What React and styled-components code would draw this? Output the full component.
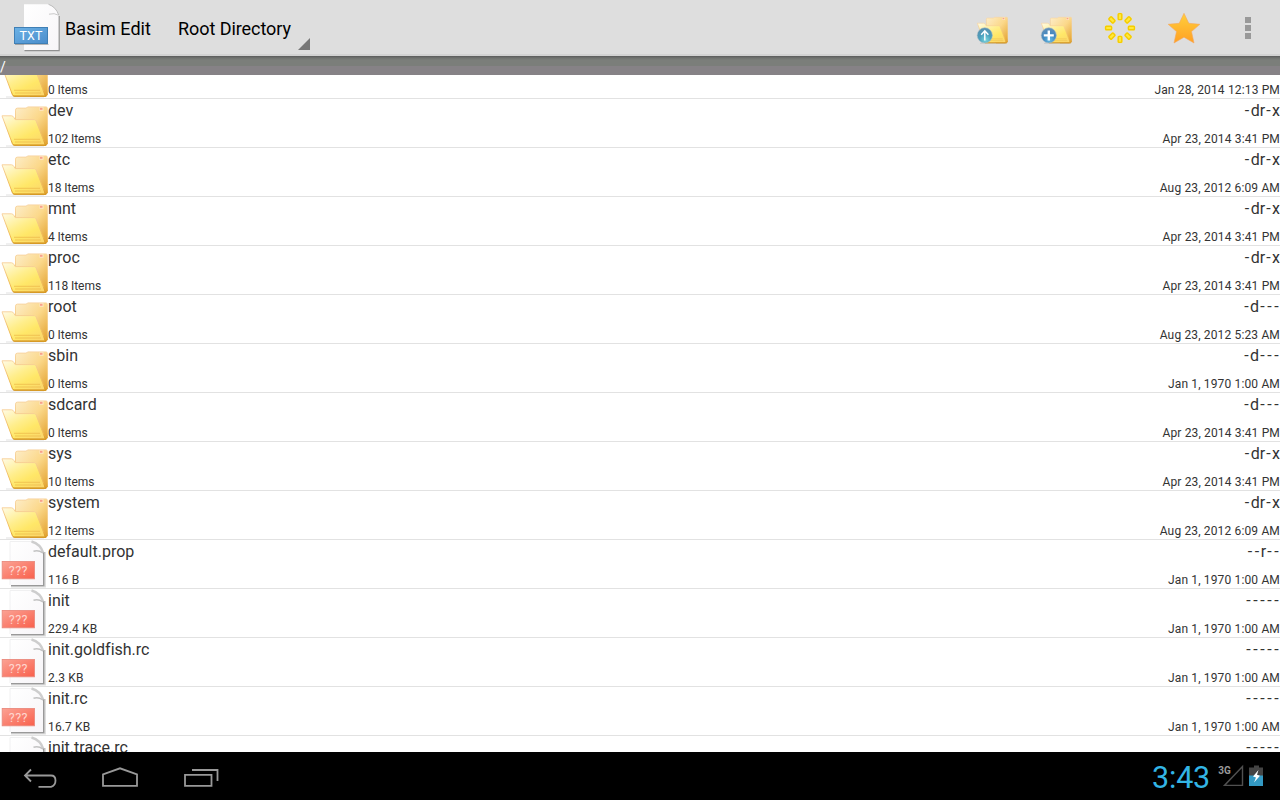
import React from 'react';
import styled, { createGlobalStyle } from 'styled-components';

const GlobalStyle = createGlobalStyle`
  * {
    box-sizing: border-box;
  }

  body {
    margin: 0;
    overflow: hidden;
    font-family: Roboto, sans-serif;
    font-variant-ligatures: none;
  }

  svg {
    display: block;
    flex: none;
  }
`;

const Screen = styled.div`
  display: flex;
  flex-direction: column;
  width: 1280px;
  height: 800px;
  overflow: hidden;
  background: #fff;
`;

const ActionBar = styled.header`
  display: flex;
  height: 56px;
  flex: none;
  background: #dedede;
  border-bottom: 2px solid #d2d2d2;
  color: #000;
`;

const AppIcon = styled.div`
  padding: 3px 0 0 13px;
`;

const Title = styled.div`
  width: 113px;
  padding-left: 4px;
  font-size: 18px;
  line-height: 58px;
  letter-spacing: ${p => p.$spacing || '0'};
  white-space: nowrap;
`;

const Spinner = styled.div`
  display: flex;
  width: 136px;
  justify-content: space-between;
`;

const SpinnerArrow = styled.div`
  padding-top: 38px;
`;

const Actions = styled.div`
  display: flex;
  margin-left: auto;
`;

const Action = styled.div`
  display: flex;
  justify-content: center;
  width: 64px;
  padding-top: 12px;
`;

const PathBar = styled.div`
  height: 19px;
  flex: none;
  background: linear-gradient(#5a5b5a 0, #70726f 2px, #7b7e7a 4px, #7b7e7a 10px, #868286 10px);
  color: #fff;
  font-size: 14px;
  line-height: 22px;
`;

const List = styled.main`
  flex: 1;
  min-height: 0;
  overflow: hidden;
`;

const Row = styled.div`
  display: flex;
  height: 49px;
  border-bottom: 1px solid #e2e2e2;
  color: #333;

  &:first-child {
    margin-top: -25px;
  }
`;

const Column = styled.div`
  display: flex;
  flex-direction: column;
  justify-content: space-between;
  align-items: ${p => (p.$end ? 'flex-end' : 'flex-start')};
  margin-left: ${p => (p.$end ? 'auto' : '0')};
  white-space: nowrap;
`;

const Name = styled.div`
  font-size: 16px;
  line-height: 24px;
`;

const Dashes = styled.span`
  margin: 0 -1.2px 0 1.2px;
  letter-spacing: 2.55px;
`;

const Detail = styled.div`
  font-size: 12px;
  line-height: 16px;
  letter-spacing: ${p => p.$spacing || '0.15px'};
`;

const NavBar = styled.footer`
  display: flex;
  height: 48px;
  flex: none;
  background: #000;
`;

const NavButton = styled.div`
  width: 80px;
`;

const Status = styled.div`
  display: flex;
  margin-left: auto;
`;

const Clock = styled.div`
  width: 65px;
  padding-left: 1px;
  color: #33b5e5;
  font-size: 30.5px;
  line-height: 51px;
  letter-spacing: -0.2px;
`;

const files = [
  ['data', '0 Items', '-d---', 'Jan 28, 2014 12:13 PM'],
  ['dev', '102 Items', '-dr-x', 'Apr 23, 2014 3:41 PM'],
  ['etc', '18 Items', '-dr-x', 'Aug 23, 2012 6:09 AM'],
  ['mnt', '4 Items', '-dr-x', 'Apr 23, 2014 3:41 PM'],
  ['proc', '118 Items', '-dr-x', 'Apr 23, 2014 3:41 PM'],
  ['root', '0 Items', '-d---', 'Aug 23, 2012 5:23 AM'],
  ['sbin', '0 Items', '-d---', 'Jan 1, 1970 1:00 AM'],
  ['sdcard', '0 Items', '-d---', 'Apr 23, 2014 3:41 PM'],
  ['sys', '10 Items', '-dr-x', 'Apr 23, 2014 3:41 PM'],
  ['system', '12 Items', '-dr-x', 'Aug 23, 2012 6:09 AM'],
  ['default.prop', '116 B', '--r--', 'Jan 1, 1970 1:00 AM'],
  ['init', '229.4 KB', '-----', 'Jan 1, 1970 1:00 AM'],
  ['init.goldfish.rc', '2.3 KB', '-----', 'Jan 1, 1970 1:00 AM'],
  ['init.rc', '16.7 KB', '-----', 'Jan 1, 1970 1:00 AM'],
  ['init.trace.rc', '1.6 KB', '-----', 'Jan 1, 1970 1:00 AM'],
];

function Gradients() {
  return (
    <svg width="0" height="0" style={{ position: 'absolute' }}>
      <defs>
        <linearGradient id="folderBack" x1="0" y1="0" x2="1" y2="1">
          <stop offset="0" stopColor="#fdedc8" />
          <stop offset="0.5" stopColor="#fbd88a" />
          <stop offset="1" stopColor="#e2a02c" />
        </linearGradient>
        <linearGradient id="folderFront" x1="0" y1="0" x2="0.8" y2="1">
          <stop offset="0" stopColor="#fffbe6" />
          <stop offset="0.45" stopColor="#ffee8c" />
          <stop offset="0.7" stopColor="#ffe767" />
          <stop offset="1" stopColor="#fbd76b" />
        </linearGradient>
        <linearGradient id="folderEdge" x1="0" y1="0" x2="0" y2="1">
          <stop offset="0" stopColor="#f8d3a0" />
          <stop offset="0.8" stopColor="#efb951" />
          <stop offset="1" stopColor="#cf8d16" />
        </linearGradient>
        <linearGradient id="page" x1="0" y1="0" x2="1" y2="1">
          <stop offset="0" stopColor="#fff" />
          <stop offset="1" stopColor="#f7f5f8" />
        </linearGradient>
        <linearGradient id="red" x1="0" y1="0" x2="1" y2="1">
          <stop offset="0" stopColor="#fba294" />
          <stop offset="1" stopColor="#f9604c" />
        </linearGradient>
        <linearGradient id="blue" x1="0" y1="0" x2="1" y2="1">
          <stop offset="0" stopColor="#6cb2e6" />
          <stop offset="1" stopColor="#4a8ccb" />
        </linearGradient>
        <radialGradient id="ball" cx="0.55" cy="0.8" r="0.8">
          <stop offset="0" stopColor="#7ad6dc" />
          <stop offset="0.5" stopColor="#4a9fbd" />
          <stop offset="1" stopColor="#5a8fae" />
        </radialGradient>
        <radialGradient id="blueBall" cx="0.55" cy="0.8" r="0.8">
          <stop offset="0" stopColor="#62bde6" />
          <stop offset="0.5" stopColor="#4288c0" />
          <stop offset="1" stopColor="#6590b8" />
        </radialGradient>
        <linearGradient id="star" x1="0" y1="0" x2="0" y2="1">
          <stop offset="0" stopColor="#ffcf3c" />
          <stop offset="1" stopColor="#ffa023" />
        </linearGradient>
      </defs>
    </svg>
  );
}

function Folder({ size = 48, badge }) {
  return (
    <svg width={size} height={size} viewBox="0 -0.6 48 48">
      <path d="M6 46.4h38" stroke="#000" strokeOpacity="0.12" strokeWidth="1.2" />
      <path d="M15.5 20V10.5Q15.5 8.5 17.5 8.5H26L28 7.3H46Q47.3 7.3 47.3 8.6V44.5L46 45.7H30Z" fill="url(#folderBack)" stroke="url(#folderEdge)" strokeWidth="0.9" />
      <path d="M39.5 7.5V11.2H43.5V7.5" fill="#fde6c4" />
      <path d="M40 9.2h2.5" stroke="#f9a08a" strokeWidth="2" />
      <path d="M2 16.2H11.5Q13 16.2 14 18L15.2 20H34.3Q35.6 20 36.2 21.4L45.4 45.6H14.5Q13 45.6 12.4 44.1Z" fill="url(#folderFront)" stroke="url(#folderEdge)" strokeWidth="1" />
      <path d="M14 39.7h26M15 42.4h26" stroke="#edbb4c" strokeWidth="0.8" />
      <path d="M13.5 45.5h32" stroke="#d79a26" strokeWidth="1" />
      {badge && <circle cx="13.2" cy="34.4" r="11.4" fill={badge === 'up' ? 'url(#ball)' : 'url(#blueBall)'} stroke="#a9bcc4" strokeWidth="0.9" />}
      {badge === 'up' && <path d="M13.2 42V28M7.8 33.5l5.4-6 5.4 6" fill="none" stroke="#fff" strokeWidth="2.2" />}
      {badge === 'add' && <path d="M13.2 27v15M5.7 34.5h15" stroke="#fff" strokeWidth="3.6" />}
    </svg>
  );
}

function UnknownFile() {
  return (
    <svg width="48" height="48" viewBox="0 0 48 48">
      <path d="M11 46H44.4V12" fill="none" stroke="#000" strokeOpacity="0.14" strokeWidth="3" />
      <path d="M11 45.5H43.6V12" fill="none" stroke="#000" strokeOpacity="0.3" strokeWidth="1.6" />
      <path d="M10 1.5H32Q40 3.5 43 12.5V45H10Z" fill="url(#page)" />
      <path d="M10 45V1.5H32" fill="none" stroke="#f0f0f1" strokeWidth="1" />
      <path d="M31.5 1.5Q40.5 4 43.3 13" fill="none" stroke="#bdbdbd" strokeWidth="2.4" strokeOpacity="0.75" />
      <path d="M33.5 11.3Q38.5 9.8 43 13" fill="none" stroke="#c2c2c2" strokeWidth="1.5" />
      <rect x="2.2" y="21.5" width="32.3" height="17.3" fill="url(#red)" stroke="#ea8a7e" strokeWidth="0.9" />
      <text x="18.4" y="34.5" textAnchor="middle" fontFamily="Roboto" fontSize="12.5" letterSpacing="0.5" fill="#ffd5ce">???</text>
    </svg>
  );
}

function TextFile() {
  return (
    <svg width="48" height="50" viewBox="0 0 48 50">
      <path d="M11.5 47.5H46V13" fill="none" stroke="#000" strokeOpacity="0.35" strokeWidth="1.5" />
      <path d="M11 1.3H35.5Q43 4 45.5 11.5V47H11Z" fill="url(#page)" />
      <path d="M35.5 1.3Q43 4 45.7 12" fill="none" stroke="#b5b5b5" strokeWidth="0.9" />
      <path d="M36 11.2Q41.5 9.7 45.5 12.2" fill="none" stroke="#c9c9c9" strokeWidth="1" />
      <path d="M2 41.4h33.5" stroke="#000" strokeOpacity="0.3" />
      <rect x="1.5" y="24.5" width="33" height="16" fill="url(#blue)" stroke="#3f7fb5" />
      <text x="18" y="37.2" textAnchor="middle" fontFamily="Roboto" fontSize="12.5" fill="#fff">TXT</text>
    </svg>
  );
}

function Rays() {
  return (
    <svg width="32" height="32" viewBox="0 0 32 32">
      {[0, 45, 90, 135, 180, 225, 270, 315].map(angle => (
        <g key={angle} transform={`rotate(${angle} 16 16)`}>
          <rect x="13.4" y="0.8" width="5.2" height="7.6" rx="1.6" fill="#fff06a" fillOpacity="0.5" />
          <rect x="14.2" y="1.6" width="3.6" height="6" rx="0.8" fill="#ffe93a" stroke="#f5cc00" strokeWidth="1.4" />
        </g>
      ))}
    </svg>
  );
}

function Mode({ value }) {
  return (
    <Name>
      {value.split(/(-+)/).filter(Boolean).map((part, i) => (
        part[0] === '-' ? <Dashes key={i}>{part}</Dashes> : part
      ))}
    </Name>
  );
}

function App() {
  return (
    <Screen>
      <GlobalStyle />
      <Gradients />
      <ActionBar>
        <AppIcon><TextFile /></AppIcon>
        <Title $spacing="0.06px">Basim Edit</Title>
        <Spinner>
          <Title $spacing="-0.06px">Root Directory</Title>
          <SpinnerArrow>
            <svg width="12" height="12" viewBox="0 0 12 12"><path d="M12 0V12H0Z" fill="#777" /></svg>
          </SpinnerArrow>
        </Spinner>
        <Actions>
          <Action><Folder size={32} badge="up" /></Action>
          <Action><Folder size={32} badge="add" /></Action>
          <Action><Rays /></Action>
          <Action>
            <svg width="32" height="32" viewBox="0 0 32 32">
              <path d="M16 1.3 20.8 11.3 31.8 12.3 23.5 19.6 26 31 16 25.2 6 31 8.5 19.6 .2 12.3 11.2 11.3Z" fill="url(#star)" stroke="#f5a860" strokeWidth="0.6" strokeLinejoin="round" />
            </svg>
          </Action>
          <Action>
            <svg width="32" height="32" viewBox="0 0 32 32">
              <path d="M13 5h6v6h-6zM13 13h6v6h-6zM13 21h6v6h-6z" fill="#999" />
            </svg>
          </Action>
        </Actions>
      </ActionBar>
      <PathBar>/</PathBar>
      <List>
        {files.map(([name, info, mode, date]) => {
          const isFolder = info.includes('Items');
          return (
            <Row key={name}>
              {isFolder ? <Folder /> : <UnknownFile />}
              <Column>
                <Name>{name}</Name>
                <Detail $spacing={isFolder ? '-0.05px' : '0.15px'}>{info}</Detail>
              </Column>
              <Column $end>
                <Mode value={mode} />
                <Detail>{date}</Detail>
              </Column>
            </Row>
          );
        })}
      </List>
      <NavBar>
        <NavButton>
          <svg width="80" height="48" viewBox="0 0 80 48" fill="none" stroke="#999" strokeWidth="1.8">
            <path d="M31 17.5 25 23.5 31 29.5M25.5 23.5H51Q55.5 23.5 55.5 28.5T51 34.8H38.5" />
          </svg>
        </NavButton>
        <NavButton>
          <svg width="80" height="48" viewBox="0 0 80 48" fill="none" stroke="#999" strokeWidth="1.8">
            <path d="M23 33.8V22.3L40 16.3 57 22.3V33.8Z" />
          </svg>
        </NavButton>
        <NavButton>
          <svg width="80" height="48" viewBox="0 0 80 48" fill="none" stroke="#999" strokeWidth="1.8">
            <path d="M25 22.8H51.5V33.8H25ZM32 18H57.5V29" />
          </svg>
        </NavButton>
        <Status>
          <Clock>3:43</Clock>
          <svg width="64" height="48" viewBox="0 0 64 48">
            <path d="M8.5 33.4H26.5V14.5Z" fill="none" stroke="#505050" strokeWidth="1.4" />
            <text x="2.2" y="22.3" fontFamily="Roboto" fontSize="10" fontWeight="700" fill="#999">3G</text>
            <path d="M33 15.5h5v-2h5v2h4v9H33Z" fill="#444" />
            <path d="M33 23.5h14V34H33Z" fill="#3399c3" />
            <path d="M42.5 18 37 24.5 40 25.5 38 30.5 44 23.8 41 22.8Z" fill="#fff" />
          </svg>
        </Status>
      </NavBar>
    </Screen>
  );
}

export default App;
